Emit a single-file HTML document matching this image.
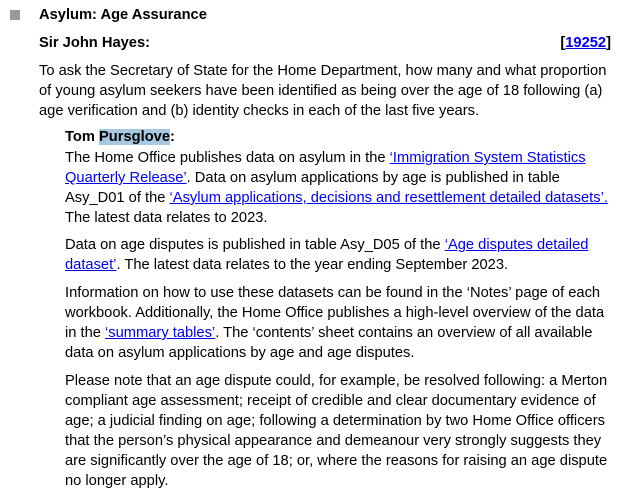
<!DOCTYPE html>
<html><head><meta charset="utf-8"><style>
html,body{margin:0;padding:0;background:#fff;width:641px;height:500px;overflow:hidden}
body{font-family:"Liberation Sans",Arial,sans-serif;font-size:14.7px;color:#000;position:relative}
.l{position:absolute;white-space:nowrap;line-height:18px}
.b{font-weight:bold}
a{color:#0000ee;text-decoration:underline}
.sq{position:absolute;left:10px;top:10px;width:10px;height:10px;background:#999}
.hl{background:#a6c8e0}
</style></head><body>
<div class="sq"></div>
<div class="l b" style="left:39px;top:6px">Asylum: Age Assurance</div>
<div class="l b" style="left:39px;top:34px">Sir John Hayes:</div>
<div class="l b" style="right:30px;top:34px">[<a href="#">19252</a>]</div>
<div class="l" style="left:39px;top:62px">To ask the Secretary of State for the Home Department, how many and what proportion</div>
<div class="l" style="left:39px;top:82px">of young asylum seekers have been identified as being over the age of 18 following (a)</div>
<div class="l" style="left:39px;top:102px">age verification and (b) identity checks in each of the last five years.</div>
<div class="l b" style="left:65px;top:128px">Tom <span class="hl">Pursglove</span>:</div>
<div class="l" style="left:65px;top:149px">The Home Office publishes data on asylum in the <a href="#">‘Immigration System Statistics</a></div>
<div class="l" style="left:65px;top:169px"><a href="#">Quarterly Release’</a>. Data on asylum applications by age is published in table</div>
<div class="l" style="left:65px;top:189px">Asy_D01 of the <a href="#">‘Asylum applications, decisions and resettlement detailed datasets’.</a></div>
<div class="l" style="left:65px;top:209px">The latest data relates to 2023.</div>
<div class="l" style="left:65px;top:236px">Data on age disputes is published in table Asy_D05 of the <a href="#">‘Age disputes detailed</a></div>
<div class="l" style="left:65px;top:256px"><a href="#">dataset’</a>. The latest data relates to the year ending September 2023.</div>
<div class="l" style="left:65px;top:284px">Information on how to use these datasets can be found in the ‘Notes’ page of each</div>
<div class="l" style="left:65px;top:304px">workbook. Additionally, the Home Office publishes a high-level overview of the data</div>
<div class="l" style="left:65px;top:324px">in the <a href="#">‘summary tables’</a>. The ‘contents’ sheet contains an overview of all available</div>
<div class="l" style="left:65px;top:344px">data on asylum applications by age and age disputes.</div>
<div class="l" style="left:65px;top:372px">Please note that an age dispute could, for example, be resolved following: a Merton</div>
<div class="l" style="left:65px;top:392px">compliant age assessment; receipt of credible and clear documentary evidence of</div>
<div class="l" style="left:65px;top:412px">age; a judicial finding on age; following a determination by two Home Office officers</div>
<div class="l" style="left:65px;top:432px">that the person’s physical appearance and demeanour very strongly suggests they</div>
<div class="l" style="left:65px;top:452px">are significantly over the age of 18; or, where the reasons for raising an age dispute</div>
<div class="l" style="left:65px;top:472px">no longer apply.</div>
</body></html>
